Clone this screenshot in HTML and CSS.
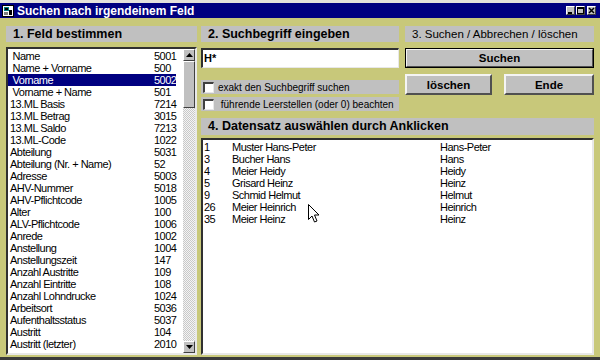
FILE: index.html
```html
<!DOCTYPE html>
<html lang="de">
<head>
  <meta charset="UTF-8" />
  <title>Suchen nach irgendeinem Feld</title>
  <link rel="stylesheet" href="styles.css">
</head>
<body>

  <div class="window">
    <div class="titlebar">
      <svg class="app-icon" width="12" height="12" viewBox="0 0 12 12">
        <rect x="0.5" y="0.5" width="11" height="11" fill="#fff" stroke="#000"/>
        <rect x="2" y="2" width="5" height="4" fill="#008080"/>
        <rect x="3" y="3" width="3" height="2" fill="#000"/>
        <rect x="7" y="5" width="3" height="5" fill="#000"/>
        <rect x="2" y="7" width="4" height="3" fill="#808080"/>
      </svg>
      <span class="title">Suchen nach irgendeinem Feld</span>
      <div class="controls">
        <span class="ctl"><svg width="7" height="7"><rect x="1" y="5" width="4" height="2" fill="#000"/></svg></span>
        <span class="ctl"><svg width="7" height="7"><rect x="0.5" y="0.5" width="6" height="6" fill="none" stroke="#000"/><rect x="0" y="0" width="7" height="2" fill="#000"/></svg></span>
        <span class="ctl close"><svg width="7" height="7"><path d="M1 1 L6 6 M6 1 L1 6" stroke="#000" stroke-width="1.5"/></svg></span>
      </div>
    </div>

    <div class="client">
      <div class="col-left">
        <div class="caption">1. Feld bestimmen</div>
        <div class="listbox fields">
          <ul class="items">
            <li>&nbsp;Name<span>5001</span></li>
            <li>&nbsp;Name + Vorname<span>500</span></li>
            <li class="selected">&nbsp;Vorname<span>5002</span></li>
            <li>&nbsp;Vorname + Name<span>501</span></li>
            <li>13.ML Basis<span>7214</span></li>
            <li>13.ML Betrag<span>3015</span></li>
            <li>13.ML Saldo<span>7213</span></li>
            <li>13.ML-Code<span>1022</span></li>
            <li>Abteilung<span>5031</span></li>
            <li>Abteilung (Nr. + Name)<span>52</span></li>
            <li>Adresse<span>5003</span></li>
            <li>AHV-Nummer<span>5018</span></li>
            <li>AHV-Pflichtcode<span>1005</span></li>
            <li>Alter<span>100</span></li>
            <li>ALV-Pflichtcode<span>1006</span></li>
            <li>Anrede<span>1002</span></li>
            <li>Anstellung<span>1004</span></li>
            <li>Anstellungszeit<span>147</span></li>
            <li>Anzahl Austritte<span>109</span></li>
            <li>Anzahl Eintritte<span>108</span></li>
            <li>Anzahl Lohndrucke<span>1024</span></li>
            <li>Arbeitsort<span>5036</span></li>
            <li>Aufenthaltsstatus<span>5037</span></li>
            <li>Austritt<span>104</span></li>
            <li>Austritt (letzter)<span>2010</span></li>
          </ul>
          <div class="scrollbar">
            <div class="sb-btn"><svg width="7" height="4"><path d="M0 4 L3.5 0 L7 4 Z" fill="#000"/></svg></div>
            <div class="sb-thumb"></div>
            <div class="sb-track"></div>
            <div class="sb-btn"><svg width="7" height="4"><path d="M0 0 L3.5 4 L7 0 Z" fill="#000"/></svg></div>
          </div>
        </div>
      </div>

      <div class="col-right">
        <div class="top-row">
          <div class="col-mid">
            <div class="caption">2. Suchbegriff eingeben</div>
            <div class="textbox">H*</div>
            <label class="check first"><span class="box"></span>exakt den Suchbegriff suchen</label>
            <label class="check"><span class="box"></span>&nbsp;führende Leerstellen (oder 0) beachten</label>
          </div>
          <div class="col-actions">
            <div class="caption light">3. Suchen / Abbrechen / löschen</div>
            <button class="btn default">Suchen</button>
            <div class="btn-row">
              <button class="btn">löschen</button>
              <button class="btn">Ende</button>
            </div>
          </div>
        </div>

        <div class="caption results-caption">4. Datensatz auswählen durch Anklicken</div>
        <div class="listbox results">
          <div class="rec"><span>1</span><span>Muster Hans-Peter</span><span>Hans-Peter</span></div>
          <div class="rec"><span>3</span><span>Bucher Hans</span><span>Hans</span></div>
          <div class="rec"><span>4</span><span>Meier Heidy</span><span>Heidy</span></div>
          <div class="rec"><span>5</span><span>Grisard Heinz</span><span>Heinz</span></div>
          <div class="rec"><span>9</span><span>Schmid Helmut</span><span>Helmut</span></div>
          <div class="rec"><span>26</span><span>Meier Heinrich</span><span>Heinrich</span></div>
          <div class="rec"><span>35</span><span>Meier Heinz</span><span>Heinz</span></div>
          <svg class="cursor" width="12" height="19" viewBox="0 0 12 19">
            <path d="M0.5 0.5 L0.5 15.5 L4 12 L6.5 18 L9 17 L6.5 11 L11 11 Z" fill="#fff" stroke="#000"/>
          </svg>
        </div>
      </div>
    </div>
  </div>

</body>
</html>
```

FILE: styles.css
```css
body {
  margin: 0;
  font-family: 'Liberation Sans', Arial, sans-serif;
  color: #000;
}
.window {
  width: 600px;
  height: 360px;
  box-sizing: border-box;
  border-top: 3px solid #e4e2dc;
  border-bottom: 3px solid #3a3a3a;
  background: #c8c87a;
  display: flex;
  flex-direction: column;
}
.titlebar {
  height: 15px;
  background: #000080;
  display: flex;
  align-items: center;
  padding-left: 2px;
}
.app-icon {
  flex: none;
}
.title {
  color: white;
  font-weight: bold;
  font-size: 12px;
  margin-left: 3px;
}
.controls {
  margin-left: auto;
  margin-right: 4px;
  display: flex;
  gap: 1px;
}
.ctl {
  width: 9px;
  height: 9px;
  background: #c0c0c0;
  border-top: 1px solid #fff;
  border-left: 1px solid #fff;
  border-right: 1px solid #404040;
  border-bottom: 1px solid #404040;
  display: flex;
  align-items: center;
  justify-content: center;
  box-sizing: border-box;
}
.ctl.close {
  margin-left: 1px;
}
.client {
  flex: 1;
  display: flex;
  padding: 8px 7px 2px 6px;
  gap: 4px;
  min-height: 0;
}
.col-left {
  width: 191px;
  display: flex;
  flex-direction: column;
}
.col-right {
  flex: 1;
  display: flex;
  flex-direction: column;
}
.top-row {
  display: flex;
  gap: 6px;
}
.col-mid {
  width: 198px;
  display: flex;
  flex-direction: column;
}
.col-actions {
  flex: 1;
  display: flex;
  flex-direction: column;
}
.caption {
  height: 16px;
  line-height: 16px;
  background: #c0c0c0;
  font-weight: bold;
  font-size: 12.5px;
  padding-left: 7px;
  white-space: nowrap;
  overflow: hidden;
}
.caption.light {
  font-weight: normal;
  font-size: 11.5px;
}
.results-caption {
  margin-top: 7px;
  height: 17px;
  line-height: 17px;
}
.listbox {
  background: white;
  border-top: 2px solid #303030;
  border-left: 2px solid #303030;
  border-right: 2px solid #e8e8e8;
  border-bottom: 2px solid #e8e8e8;
  box-sizing: border-box;
  font-size: 11px;
  letter-spacing: -0.5px;
}
.fields {
  flex: 1;
  margin-top: 5px;
  display: flex;
  min-height: 0;
  overflow: hidden;
}
.items {
  list-style: none;
  margin: 1px 7px 0 0;
  padding: 0;
  flex: 1;
}
.items li {
  height: 12px;
  line-height: 12px;
  padding-left: 2px;
  display: grid;
  grid-template-columns: 144px auto;
  white-space: nowrap;
}
.items li.selected {
  background: #000080;
  color: white;
}
.scrollbar {
  width: 12px;
  display: flex;
  flex-direction: column;
}
.sb-btn, .sb-thumb {
  background: #c0c0c0;
  border-top: 1px solid #fff;
  border-left: 1px solid #fff;
  border-right: 1px solid #404040;
  border-bottom: 1px solid #404040;
  box-sizing: border-box;
}
.sb-btn {
  height: 12px;
  display: flex;
  align-items: center;
  justify-content: center;
}
.sb-thumb {
  height: 47px;
}
.sb-track {
  flex: 1;
  background: repeating-conic-gradient(#c8c8c8 0 25%, #f4f4f4 0 50%) 0 0 / 2px 2px;
}
.textbox {
  margin-top: 6px;
  height: 20px;
  line-height: 17px;
  background: white;
  border-top: 2px solid #303030;
  border-left: 2px solid #303030;
  border-right: 1px solid #e8e8e8;
  border-bottom: 1px solid #e8e8e8;
  box-sizing: border-box;
  font-weight: bold;
  font-size: 11px;
  padding-left: 1px;
}
.check {
  height: 14px;
  margin-top: 3px;
  background: #c0c0c0;
  display: flex;
  align-items: center;
  font-size: 10px;
  padding-left: 2px;
  white-space: nowrap;
}
.check.first {
  margin-top: 12px;
}
.box {
  width: 11px;
  height: 11px;
  box-sizing: border-box;
  background: white;
  border-top: 2px solid #404040;
  border-left: 2px solid #404040;
  border-right: 1px solid #e8e8e8;
  border-bottom: 1px solid #e8e8e8;
  margin-right: 4px;
}
.btn {
  font-family: inherit;
  font-weight: bold;
  font-size: 11.5px;
  background: #c0c0c0;
  border-top: 2px solid #f4f4f4;
  border-left: 2px solid #f4f4f4;
  border-right: 2px solid #505050;
  border-bottom: 2px solid #505050;
  padding: 0;
  height: 21px;
  color: #000;
}
.btn.default {
  margin-top: 6px;
  height: 20px;
  outline: 1px solid #000;
  outline-offset: -1px;
}
.btn-row {
  margin-top: 6px;
  display: grid;
  grid-template-columns: 87px 90px;
  justify-content: space-between;
}
.results {
  flex: 1;
  margin-top: 3px;
  padding-top: 1px;
  position: relative;
  width: 393px;
}
.rec {
  height: 12px;
  line-height: 12px;
  display: grid;
  grid-template-columns: 28px 208px auto;
  padding-left: 1px;
  white-space: nowrap;
}
.cursor {
  position: absolute;
  left: 105px;
  top: 64px;
}
```
